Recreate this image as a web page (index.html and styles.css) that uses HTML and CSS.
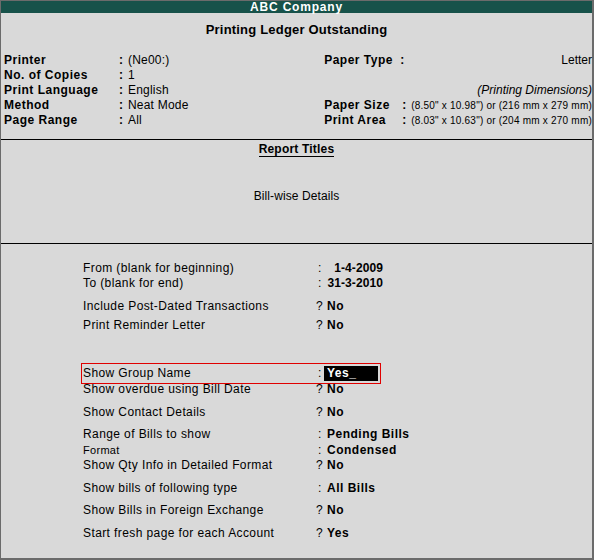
FILE: index.html
```html
<!DOCTYPE html>
<html>
<head>
<meta charset="utf-8">
<link rel="stylesheet" href="styles.css">
</head>
<body>
<div class="window">
  <div class="titlebar">ABC Company</div>
  <div class="heading">Printing Ledger Outstanding</div>

  <div class="info">
    <div class="info-left">
      <div class="irow"><span class="ilabel">Printer</span><span class="icolon">:</span><span class="ivalue">(Ne00:)</span></div>
      <div class="irow"><span class="ilabel">No. of Copies</span><span class="icolon">:</span><span class="ivalue">1</span></div>
      <div class="irow"><span class="ilabel">Print Language</span><span class="icolon">:</span><span class="ivalue">English</span></div>
      <div class="irow"><span class="ilabel">Method</span><span class="icolon">:</span><span class="ivalue">Neat Mode</span></div>
      <div class="irow"><span class="ilabel">Page Range</span><span class="icolon">:</span><span class="ivalue">All</span></div>
    </div>
    <div class="info-right">
      <div class="irow"><span class="rlabel">Paper Type</span><span class="rcolon">:</span><span class="rvalue right">Letter</span></div>
      <div class="irow"></div>
      <div class="irow"><span class="rvalue right italic">(Printing Dimensions)</span></div>
      <div class="irow"><span class="rlabel">Paper Size</span><span class="rcolon wide">:</span><span class="rvalue small">(8.50" x 10.98") or (216 mm x 279 mm)</span></div>
      <div class="irow"><span class="rlabel">Print Area</span><span class="rcolon wide">:</span><span class="rvalue small">(8.03" x 10.63") or (204 mm x 270 mm)</span></div>
    </div>
  </div>

  <div class="titles">
    <div class="titles-head"><span>Report Titles</span></div>
    <div class="titles-text">Bill-wise Details</div>
  </div>

  <div class="options">
    <div class="orow"><span class="olabel">From (blank for beginning)</span><span class="osep">:</span><span class="ovalue date">1-4-2009</span></div>
    <div class="orow"><span class="olabel">To (blank for end)</span><span class="osep">:</span><span class="ovalue date">31-3-2010</span></div>
    <div class="orow g8"><span class="olabel">Include Post-Dated Transactions</span><span class="osep q">?</span><span class="ovalue">No</span></div>
    <div class="orow g4"><span class="olabel">Print Reminder Letter</span><span class="osep q">?</span><span class="ovalue">No</span></div>
    <div class="orow active"><span class="olabel">Show Group Name</span><span class="osep">:</span><span class="ovalue edit">Yes_</span></div>
    <div class="orow"><span class="olabel">Show overdue using Bill Date</span><span class="osep q">?</span><span class="ovalue">No</span></div>
    <div class="orow g8"><span class="olabel">Show Contact Details</span><span class="osep q">?</span><span class="ovalue">No</span></div>
    <div class="orow g7"><span class="olabel">Range of Bills to show</span><span class="osep">:</span><span class="ovalue">Pending Bills</span></div>
    <div class="orow g1"><span class="olabel small">Format</span><span class="osep">:</span><span class="ovalue">Condensed</span></div>
    <div class="orow"><span class="olabel">Show Qty Info in Detailed Format</span><span class="osep q">?</span><span class="ovalue">No</span></div>
    <div class="orow g8"><span class="olabel">Show bills of following type</span><span class="osep">:</span><span class="ovalue">All Bills</span></div>
    <div class="orow g7"><span class="olabel">Show Bills in Foreign Exchange</span><span class="osep q">?</span><span class="ovalue">No</span></div>
    <div class="orow g8"><span class="olabel">Start fresh page for each Account</span><span class="osep q">?</span><span class="ovalue">Yes</span></div>
  </div>
</div>
</body>
</html>
```

FILE: styles.css
```css
html, body {
  margin: 0;
  padding: 0;
  background: #d9d9d9;
}
body {
  font-family: "Liberation Sans", Arial, sans-serif;
  font-size: 12px;
  color: #000;
}
.window {
  box-sizing: border-box;
  width: 594px;
  height: 560px;
  background: #d9d9d9;
  border-top: 1px solid #6b6b6b;
  border-left: 1px solid #6b6b6b;
  border-right: 2px solid #6b6b6b;
  border-bottom: 2px solid #6b6b6b;
  display: flex;
  flex-direction: column;
}
.titlebar {
  height: 12px;
  line-height: 12px;
  background: #17524a;
  color: #fff;
  font-weight: bold;
  font-size: 12px;
  letter-spacing: 0.8px;
  text-align: center;
}
.heading {
  margin-top: 9px;
  line-height: 16px;
  font-size: 13px;
  font-weight: bold;
  letter-spacing: 0.2px;
  text-align: center;
}
.info {
  display: flex;
  margin-top: 15px;
  padding-bottom: 11px;
  border-bottom: 1px solid #000;
}
.info-left {
  width: 324px;
  padding-left: 3px;
  box-sizing: border-box;
}
.info-right {
  flex: 1;
}
.irow {
  display: flex;
  height: 15px;
  line-height: 15px;
  white-space: nowrap;
}
.ilabel {
  width: 115px;
  font-weight: bold;
  letter-spacing: 0.5px;
}
.icolon {
  width: 9px;
  font-weight: bold;
}
.ivalue {
  letter-spacing: 0.2px;
}
.rlabel {
  width: 76px;
  font-weight: bold;
  letter-spacing: 0.5px;
}
.rcolon {
  width: 11px;
  font-weight: bold;
}
.rcolon.wide {
  padding-left: 2px;
  width: 9px;
}
.rvalue.right {
  margin-left: auto;
  text-align: right;
}
.italic {
  font-style: italic;
}
.rvalue.small {
  font-size: 10px;
  letter-spacing: 0.22px;
}
.titles {
  height: 103px;
  border-bottom: 1px solid #000;
  text-align: center;
}
.titles-head {
  margin-top: 2px;
  line-height: 15px;
  font-weight: bold;
  letter-spacing: 0.2px;
}
.titles-head span {
  display: inline-block;
  border-bottom: 1px solid #000;
  line-height: 14px;
}
.titles-text {
  margin-top: 32px;
  line-height: 15px;
  letter-spacing: 0.1px;
}
.options {
  padding-top: 17px;
  padding-left: 82px;
}
.orow {
  display: flex;
  height: 15px;
  line-height: 15px;
  white-space: nowrap;
}
.orow.g1 { margin-top: 1px; }
.orow.g4 { margin-top: 4px; }
.orow.g7 { margin-top: 7px; }
.orow.g8 { margin-top: 8px; }
.olabel {
  width: 233px;
  letter-spacing: 0.4px;
}
.olabel.small {
  font-size: 11px;
  letter-spacing: 0.3px;
}
.osep {
  width: 9px;
  padding-left: 2px;
}
.osep.q {
  padding-left: 0;
  width: 11px;
}
.ovalue {
  font-weight: bold;
  letter-spacing: 0.5px;
}
.ovalue.date {
  width: 56px;
  text-align: right;
  letter-spacing: 0.1px;
}
.orow.active {
  margin-top: 30px;
  margin-left: -2px;
  width: 297px;
  height: 19px;
  border: 1px solid #e00000;
  padding-left: 1px;
  align-items: center;
  margin-bottom: -2px;
}
.ovalue.edit {
  margin-left: -3px;
  padding-left: 3px;
  width: 51px;
  height: 15px;
  background: #000;
  color: #fff;
}
```
